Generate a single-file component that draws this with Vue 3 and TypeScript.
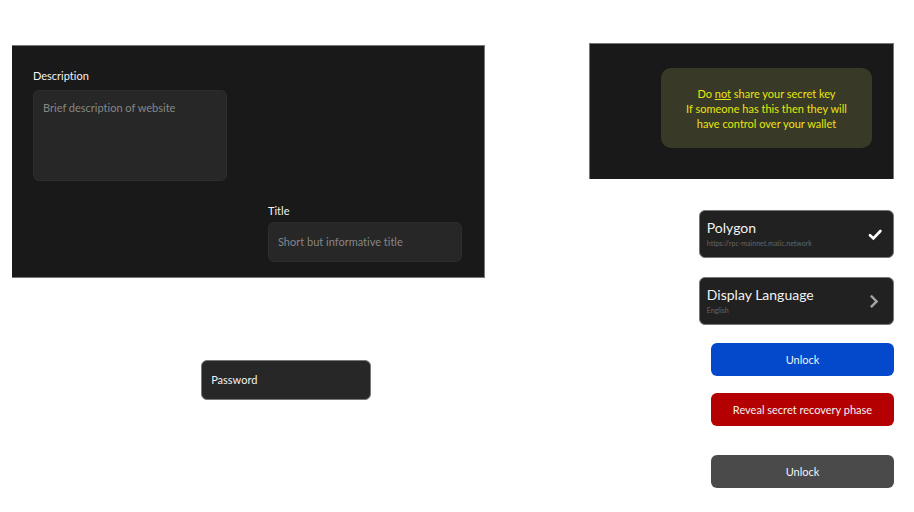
<script setup lang="ts">
import { ref } from 'vue'

interface Action {
  label: string
  tone: 'primary' | 'danger' | 'muted'
}

const description = ref('')
const title = ref('')
const password = ref('')

const actions: Action[] = [
  { label: 'Unlock', tone: 'primary' },
  { label: 'Reveal secret recovery phase', tone: 'danger' },
  { label: 'Unlock', tone: 'muted' },
]
</script>

<template>
  <main class="page">
    <section class="column forms">
      <form class="panel site-form" @submit.prevent>
        <div class="field field-description">
          <label for="description">Description</label>
          <textarea id="description" v-model="description" placeholder="Brief description of website"></textarea>
        </div>
        <div class="field field-title">
          <label for="title">Title</label>
          <input id="title" v-model="title" type="text" placeholder="Short but informative title" />
        </div>
      </form>
      <input
        v-model="password"
        class="password"
        type="password"
        placeholder="Password"
        aria-label="Password"
      />
    </section>

    <section class="column controls">
      <div class="panel notice-panel">
        <p class="notice">
          Do <u>not</u> share your secret key<br />
          If someone has this then they will<br />
          have control over your wallet
        </p>
      </div>

      <div class="options">
        <button type="button" class="option">
          <span class="option-text">
            <span class="option-name">Polygon</span>
            <span class="option-detail">https://rpc-mainnet.matic.network</span>
          </span>
          <svg class="icon" viewBox="0 0 16 16" aria-hidden="true">
            <path d="M3 9.2 6.4 12.4 13.4 5" fill="none" stroke="#fff" stroke-width="2.7" stroke-linecap="round" stroke-linejoin="miter" />
          </svg>
        </button>
        <button type="button" class="option">
          <span class="option-text">
            <span class="option-name">Display Language</span>
            <span class="option-detail">English</span>
          </span>
          <svg class="icon" viewBox="0 0 16 16" aria-hidden="true">
            <path d="M4.8 3.6 9.6 8.4 4.8 13.2" fill="none" stroke="#a3a3a3" stroke-width="2.5" stroke-linecap="square" stroke-linejoin="miter" />
          </svg>
        </button>
      </div>

      <div class="actions">
        <button
          v-for="(action, index) in actions"
          :key="index"
          type="button"
          class="action"
          :class="action.tone"
        >
          {{ action.label }}
        </button>
      </div>
    </section>
  </main>
</template>

<style>
body {
  margin: 0;
  background: #fff;
}
</style>

<style scoped>
.page,
.page * {
  box-sizing: border-box;
}

.page {
  display: grid;
  grid-template-columns: 473fr 305fr;
  column-gap: 104px;
  align-items: start;
  padding: 43px 20px 24px 12px;
  color: #f2f2f2;
  font-family: Lato, sans-serif;
  font-size: 11px;
  font-variant-ligatures: none;
  line-height: 15px;
}

button,
input,
textarea {
  margin: 0;
  color: inherit;
  font: inherit;
  font-variant-ligatures: none;
}

.column {
  display: flex;
  flex-direction: column;
}

.panel {
  background: #191919;
  border: 1px solid #777;
}

.forms {
  padding-top: 2px;
}

.site-form {
  display: grid;
  grid-template-columns: 1fr 1fr;
  column-gap: 41px;
  row-gap: 22px;
  padding: 22px 22px 15px 21px;
  border-left-width: 0;
}

.field {
  display: flex;
  flex-direction: column;
}

.field-description {
  gap: 7px;
}

.field-title {
  grid-column: 2;
  grid-row: 2;
  gap: 4px;
}

.field input,
.field textarea {
  display: block;
  width: 100%;
  padding: 9px 9px 11px;
  background: #272727;
  border: 1px solid #2d2d2d;
  border-radius: 6px;
  outline: none;
  resize: none;
}

.field textarea {
  height: 91px;
}

.field input {
  height: 40px;
}

.field ::placeholder {
  color: #868686;
  opacity: 1;
}

.password {
  width: 36%;
  height: 40px;
  margin-top: 82px;
  margin-left: 40%;
  padding: 9px 9px 11px;
  background: #272727;
  border: 1px solid #777;
  border-radius: 6px;
  outline: none;
}

.password::placeholder {
  color: #f2f2f2;
  opacity: 1;
}

.controls {
  align-items: flex-end;
}

.notice-panel {
  display: flex;
  justify-content: flex-end;
  width: 100%;
  padding: 24px 21px 31px;
  border-bottom-width: 0;
}

.notice {
  flex: 0 1 211px;
  margin: 0;
  padding: 18px 0 17px;
  background: #393927;
  border-radius: 10px;
  color: #e6e60f;
  text-align: center;
  white-space: nowrap;
}

.options {
  display: flex;
  flex-direction: column;
  gap: 19px;
  width: 64%;
  margin-top: 31px;
}

.option {
  display: flex;
  align-items: center;
  justify-content: space-between;
  height: 48px;
  padding: 0 10px 0 7px;
  background: #212121;
  border: 1px solid #777;
  border-radius: 6px;
  text-align: left;
}

.option-text {
  display: flex;
  flex-direction: column;
  padding-bottom: 3px;
}

.option-name {
  font-size: 14px;
  line-height: 20px;
}

.option-detail {
  color: #666;
  font-size: 7px;
  line-height: 10px;
}

.icon {
  width: 16px;
  height: 16px;
}

.actions {
  display: flex;
  flex-direction: column;
  gap: 17px;
  width: 60%;
  margin-top: 18px;
}

.action {
  height: 33px;
  padding: 0 10px;
  border: 0;
  border-radius: 6px;
}

.primary {
  background: #0448cc;
}

.danger {
  background: #b50000;
}

.muted {
  margin-top: 12px;
  background: #4a4a4a;
}
</style>
